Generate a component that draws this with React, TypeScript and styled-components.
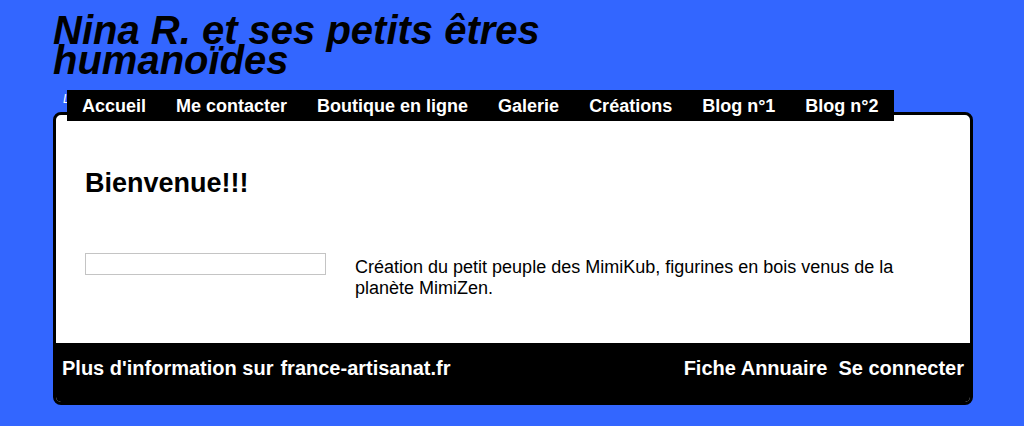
import React from 'react';
import styled, { createGlobalStyle } from 'styled-components';

const GlobalStyle = createGlobalStyle`
  html, body {
    margin: 0;
    padding: 0;
    background: #3366ff;
    font-family: "Liberation Sans", Arial, sans-serif;
  }
`;

const navItems = ['Accueil', 'Me contacter', 'Boutique en ligne', 'Galerie', 'Créations', 'Blog n°1', 'Blog n°2'];

const App: React.FC = () => {
  return (
    <>
      <GlobalStyle />
      <Page>
        <Title>Nina R. et ses petits êtres humanoïdes</Title>
        <NavArea>
          <Tagline>L</Tagline>
          <Nav>
            {navItems.map((item) => (
              <NavLink key={item} href="#">{item}</NavLink>
            ))}
          </Nav>
        </NavArea>
        <Card>
          <Content>
            <Heading>Bienvenue!!!</Heading>
            <Row>
              <SearchBox type="text" />
              <Description>
                Création du petit peuple des MimiKub, figurines en bois venus de la planète MimiZen.
              </Description>
            </Row>
          </Content>
          <Footer>
            <FooterGroup $gap={7}>
              <FooterLink href="#">Plus d'information sur</FooterLink>
              <FooterLink href="#">france-artisanat.fr</FooterLink>
            </FooterGroup>
            <FooterGroup $gap={11}>
              <FooterLink href="#">Fiche Annuaire</FooterLink>
              <FooterLink href="#">Se connecter</FooterLink>
            </FooterGroup>
          </Footer>
        </Card>
      </Page>
    </>
  );
};

const Page = styled.div`
  width: 920px;
  padding: 12px 0 21px 53px;
`;

const Title = styled.h1`
  margin: 0;
  width: 520px;
  font-size: 40px;
  line-height: 30px;
  font-style: italic;
  font-weight: bold;
  color: #000;
  padding-top: 3px;
`;

const NavArea = styled.div`
  position: relative;
  margin-top: 15px;
  margin-bottom: -9px;
  padding-left: 14px;
  z-index: 2;
`;

const Tagline = styled.span`
  position: absolute;
  left: 10px;
  top: 2px;
  font-size: 12px;
  font-style: italic;
  color: #fff;
  z-index: -1;
`;

const Nav = styled.nav`
  display: inline-flex;
  background: #000;
  height: 31px;
  align-items: center;
  padding-top: 1px;
  box-sizing: border-box;
`;

const NavLink = styled.a`
  color: #fff;
  font-weight: bold;
  font-size: 18px;
  text-decoration: none;
  padding: 0 15px;
`;

const Card = styled.div`
  background: #fff;
  border: 3px solid #000;
  border-radius: 8px;
  overflow: hidden;
`;

const Content = styled.div`
  padding: 52px 29px 44px 29px;
  height: 132px;
`;

const Heading = styled.h2`
  margin: 0;
  font-size: 27px;
  line-height: 32px;
  font-weight: bold;
  color: #000;
`;

const Row = styled.div`
  display: flex;
  gap: 29px;
  margin-top: 54px;
  align-items: flex-start;
`;

const SearchBox = styled.input`
  width: 241px;
  height: 22px;
  box-sizing: border-box;
  border: 1px solid #c4c4c4;
  margin: 0;
  padding: 0;
  flex-shrink: 0;
`;

const Description = styled.p`
  margin: 4px 0 0;
  font-size: 18px;
  line-height: 21px;
  color: #000;
`;

const Footer = styled.div`
  background: #000;
  display: flex;
  justify-content: space-between;
  padding: 12px 6px 0;
  height: 47px;
`;

const FooterGroup = styled.div<{ $gap: number }>`
  display: flex;
  gap: ${(p) => p.$gap}px;
`;

const FooterLink = styled.a`
  color: #fff;
  font-weight: bold;
  font-size: 20px;
  line-height: 26px;
  text-decoration: none;
`;

export default App;
